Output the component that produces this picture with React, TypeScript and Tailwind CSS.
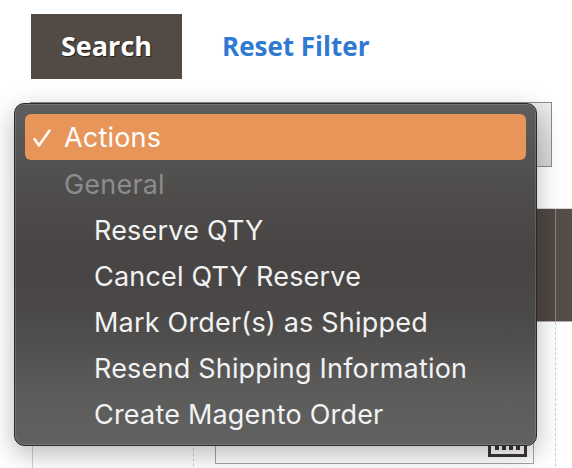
import React from 'react';

const items = [
  'Reserve QTY',
  'Cancel QTY Reserve',
  'Mark Order(s) as Shipped',
  'Resend Shipping Information',
  'Create Magento Order',
];

export default function App() {
  return (
    <div className="relative w-[572px] h-[468px] overflow-hidden bg-white">
      {/* ── FILTER ACTIONS ── */}
      <div className="flex items-center pt-[14px] pl-[31px] font-['Open_Sans',sans-serif]">
        <button className="w-[151px] h-[65px] bg-[#514a45] text-white text-[27px] font-bold [text-shadow:1px_1px_1px_rgba(0,0,0,0.6)]">
          Search
        </button>
        <span className="ml-[40px] text-[26px] font-bold text-[#2f79d3]">Reset Filter</span>
      </div>

      {/* ── MASS ACTION SELECT (behind menu) ── */}
      <div className="ml-[30px] mt-[23px] w-[522px] h-[65px] border border-[#8b8b8b] bg-gradient-to-b from-[#ececec] to-[#d6d6d6]" />

      {/* ── GRID ── */}
      <div className="ml-[32px] mt-[41px]">
        <div className="flex h-[114px] bg-[#4f4743] border-t border-[#d6d6d6] border-b border-b-[#b3aeaa]">
          <div className="w-[162px]" />
          <div className="w-[362px] border-r border-[#8a8480]" />
          <div className="flex-1 bg-[#574d47]" />
        </div>
        <div className="flex h-[200px] border-l border-[#cfcfcf]">
          <div className="w-[161px] border-r border-dashed border-[#d0d0d0]" />
          <div className="w-[362px] border-r border-dashed border-[#d0d0d0] px-[21px] pt-[108px]">
            <div className="h-[34px] border border-[#a6a6a6] flex justify-end items-end pr-[6px] pb-[6px]">
              <div className="w-[39px] h-[16px] border-[3px] border-[#3b3634] flex items-start justify-center gap-[3px] pt-[2px]">
                <span className="w-[4px] h-[4px] bg-[#3b3634]" />
                <span className="w-[4px] h-[4px] bg-[#3b3634]" />
                <span className="w-[4px] h-[4px] bg-[#3b3634]" />
                <span className="w-[4px] h-[4px] bg-[#3b3634]" />
              </div>
            </div>
          </div>
        </div>
      </div>

      {/* ── OPEN MENU ── */}
      <div
        className="absolute left-[14px] top-[103px] w-[523px] h-[343px] rounded-[10px] border border-[#2a2a2a] shadow-[0_8px_26px_rgba(0,0,0,0.28),inset_0_0_0_1px_rgba(255,255,255,0.14)] px-[10px] py-[10px] font-['Inter',sans-serif] text-[27px] tracking-[0.2px] text-[#f2f2f2]"
        style={{
          background:
            'linear-gradient(to bottom, #5e5e5e 0%, #4f4d4c 25%, #474443 45%, #4b4948 62%, #5c5c5b 85%, #616161 100%)',
        }}
      >
        <div className="h-[46px] pt-[3px] rounded-[6px] bg-[#e8955a] flex items-center">
          <svg width="18" height="19" viewBox="0 0 18 19" className="ml-[8px]">
            <polyline points="1.5,10 6,16.5 16.5,1.5" fill="none" stroke="#ffffff" strokeWidth="2.4" strokeLinecap="round" strokeLinejoin="round" />
          </svg>
          <span className="ml-[13px] text-white">Actions</span>
        </div>
        <div className="h-[46px] pt-[4px] flex items-center pl-[39px] text-[#8c8c8c]">General</div>
        {items.map((item) => (
          <div key={item} className="h-[46px] pt-[4px] flex items-center pl-[69px]">
            {item}
          </div>
        ))}
      </div>
    </div>
  );
}
